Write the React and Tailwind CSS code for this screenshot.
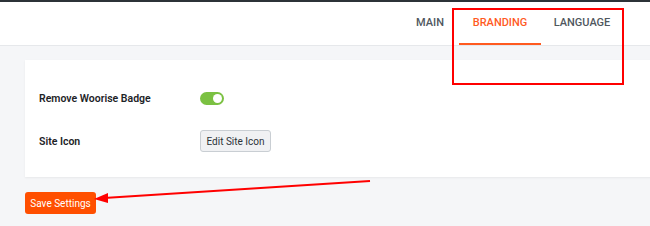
export default function App() {
  return (
    <div className="relative w-[650px] h-[226px] overflow-hidden bg-[#f5f6f8] font-['Roboto',sans-serif]">
      <div className="h-[2px] bg-[#2c3338]" />
      <div className="h-[44px] bg-white border-b border-[#e6e8eb] flex justify-end items-stretch pr-[27px] text-[11px] font-medium uppercase">
        <div className="w-[58px] flex items-center justify-center text-[#50575e]">Main</div>
        <div className="w-[82px] flex items-center justify-center text-[#ff5a1f] border-b-2 border-[#ff5a1f] pt-[2px]">Branding</div>
        <div className="w-[82px] flex items-center justify-center text-[#50575e]">Language</div>
      </div>

      <div className="ml-[25px] mt-[14px] w-[640px] bg-white shadow-[0_1px_2px_rgba(0,0,0,0.06)] pl-[14px] pt-[27px] pb-[25px] flex flex-col gap-[21px]">
        <div className="flex items-center h-[22px] pt-[1px]">
          <div className="w-[161px] text-[10.5px] font-semibold text-[#1d2327]">Remove Woorise Badge</div>
          <div className="relative w-[24px] h-[13px] rounded-full bg-[#7bc142]">
            <div className="absolute right-[2px] top-[2px] w-[9px] h-[9px] rounded-full bg-white" />
          </div>
        </div>
        <div className="flex items-center h-[22px]">
          <div className="w-[161px] text-[10.5px] font-semibold text-[#1d2327] pt-[1px]">Site Icon</div>
          <button className="h-[22px] w-[71px] rounded-[3px] border border-[#c9ced3] bg-[#f0f1f3] text-[10px] text-[#2c3338]">
            Edit Site Icon
          </button>
        </div>
      </div>

      <button className="ml-[25px] mt-[15px] w-[71px] h-[22px] rounded-[3px] bg-[#ff4f00] text-white text-[10px]">
        Save Settings
      </button>

      <svg className="absolute left-0 top-0 pointer-events-none" width="650" height="226">
        <rect x="453" y="9" width="170" height="75" fill="none" stroke="#ff0000" strokeWidth="2" />
        <line x1="370" y1="181" x2="104" y2="198" stroke="#ff0000" strokeWidth="2" />
        <polygon points="94,199 108,193 108,203" fill="#ff0000" />
      </svg>
    </div>
  )
}
